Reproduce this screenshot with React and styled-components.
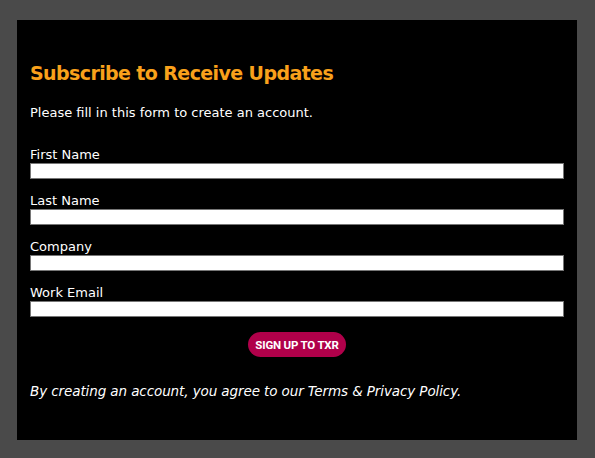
import React from "react";
import styled, { createGlobalStyle } from "styled-components";

const GlobalStyle = createGlobalStyle`
  html, body {
    margin: 0;
    padding: 0;
    background: #4a4a4a;
  }
  * {
    box-sizing: border-box;
  }
`;

const Page = styled.div`
  width: 595px;
  height: 458px;
  padding: 20px 18px 18px 17px;
`;

const Panel = styled.div`
  width: 560px;
  height: 420px;
  background: #000;
  padding: 40px 13px 0 13px;
  font-family: "DejaVu Sans", "Open Sans", sans-serif;
  color: #fff;
`;

const Title = styled.h2`
  margin: 0;
  font-size: 19px;
  font-weight: 700;
  line-height: 26px;
  color: #f9a11b;
  letter-spacing: -0.6px;
`;

const Intro = styled.p`
  margin: 18px 0 25px;
  font-size: 13px;
  line-height: 18px;
  letter-spacing: 0;
`;

const Form = styled.form`
  display: flex;
  flex-direction: column;
  gap: 14px;
`;

const Field = styled.label`
  display: flex;
  flex-direction: column;
`;

const LabelText = styled.span`
  font-size: 13px;
  line-height: 16px;
`;

const Input = styled.input`
  width: 534px;
  height: 16px;
  margin: 0;
  padding: 0 4px;
  border: 1px solid #767676;
  background: #fff;
  outline: none;
`;

const ButtonRow = styled.div`
  display: flex;
  justify-content: center;
  margin-top: 1px;
`;

const SignUp = styled.button`
  height: 25px;
  padding: 0 7px;
  border: none;
  border-radius: 13px;
  background: #b0004a;
  color: #fff;
  font-family: "Roboto", "Liberation Sans", sans-serif;
  font-weight: 700;
  font-size: 11.5px;
  letter-spacing: -0.2px;
  cursor: pointer;
`;

const Terms = styled.p`
  margin: 25px 0 0;
  font-size: 13.5px;
  font-style: italic;
  line-height: 18px;
  letter-spacing: -0.1px;
`;

const fields = ["First Name", "Last Name", "Company", "Work Email"];

export default function App() {
  return (
    <>
      <GlobalStyle />
      <Page>
        <Panel>
          <Title>Subscribe to Receive Updates</Title>
          <Intro>Please fill in this form to create an account.</Intro>
          <Form onSubmit={(e) => e.preventDefault()}>
            {fields.map((f) => (
              <Field key={f}>
                <LabelText>{f}</LabelText>
                <Input type="text" />
              </Field>
            ))}
            <ButtonRow>
              <SignUp type="submit">SIGN UP TO TXR</SignUp>
            </ButtonRow>
          </Form>
          <Terms>By creating an account, you agree to our Terms &amp; Privacy Policy.</Terms>
        </Panel>
      </Page>
    </>
  );
}
